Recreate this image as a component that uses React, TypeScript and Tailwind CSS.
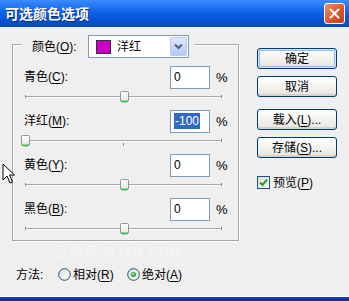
import React from "react";

function U({ children }: { children: React.ReactNode }) {
  return <span className="underline underline-offset-[2px]">{children}</span>;
}

function Thumb() {
  return (
    <svg width="11" height="12" viewBox="0 0 11 12">
      <defs>
        <linearGradient id="thg" x1="0" y1="0" x2="0" y2="1">
          <stop offset="0" stopColor="#ffffff" />
          <stop offset="1" stopColor="#e4e4dc" />
        </linearGradient>
      </defs>
      <path d="M2.5 0.5 H8.5 Q9.5 0.5 9.5 1.5 V9 Q9.5 11 7.5 11 H3.5 Q1.5 11 1.5 9 V1.5 Q1.5 0.5 2.5 0.5 Z" fill="url(#thg)" stroke="#8a97a3" />
      <path d="M2.3 9.3 Q2.5 10.3 3.6 10.3 H7.4 Q8.5 10.3 8.7 9.3" fill="none" stroke="#3cc447" strokeWidth="1.4" />
    </svg>
  );
}

function Slider({ pct }: { pct: number }) {
  return (
    <div className="relative ml-[12px] h-[22px] w-[197px]">
      <div className="absolute left-0 right-0 top-[8px] h-px bg-[#a7a7a7]" />
      <div className="absolute left-0 top-[9px] right-0 h-px bg-white" />
      <div className="absolute left-0 top-[7px] h-[3px] w-px bg-[#8c8c8c]" />
      <div className="absolute right-0 top-[7px] h-[3px] w-px bg-[#8c8c8c]" />
      <div className="absolute left-[98px] top-[11px] h-[3px] w-px bg-[#8c8c8c]" />
      <div className="absolute top-[3px]" style={{ left: `calc(${pct}% - 5px)` }}>
        <Thumb />
      </div>
    </div>
  );
}

function Row({ name, k, value, pct, sel }: { name: string; k: string; value: string; pct: number; sel?: boolean }) {
  return (
    <div className="flex flex-col">
      <div className="flex h-[22px] items-center">
        <span className="ml-[11px] w-[146px] leading-none">
          {name}(<U>{k}</U>):
        </span>
        <div className="flex h-[23px] w-[40px] items-center border border-[#7f9db9] bg-white pl-[3px]">
          {sel ? (
            <span className="bg-[#316ac5] px-[1px] leading-[16px] text-white">{value}</span>
          ) : (
            <span className="leading-none">{value}</span>
          )}
        </div>
        <span className="ml-[6px] text-[13px] leading-none">%</span>
      </div>
      <Slider pct={pct} />
    </div>
  );
}

function Btn({ children, def }: { children: React.ReactNode; def?: boolean }) {
  return (
    <div
      className={
        "flex h-[21px] w-[80px] items-center justify-center rounded-[3px] border border-[#003c74] bg-gradient-to-b from-[#ffffff] to-[#e6e5de] leading-none " +
        (def ? "shadow-[inset_0_0_0_1px_#cee7ff,inset_0_0_0_2px_#98b8ea]" : "shadow-[inset_0_-2px_0_#d6d0c5]")
      }
    >
      {children}
    </div>
  );
}

function Radio({ on }: { on?: boolean }) {
  return (
    <svg width="13" height="13" viewBox="0 0 13 13">
      <defs>
        <linearGradient id={on ? "rg1" : "rg0"} x1="0" y1="0" x2="1" y2="1">
          <stop offset="0" stopColor="#dcdcd6" />
          <stop offset="1" stopColor="#ffffff" />
        </linearGradient>
      </defs>
      <circle cx="6.5" cy="6.5" r="5.8" fill={`url(#${on ? "rg1" : "rg0"})`} stroke="#1c5180" strokeWidth="1" />
      {on && <circle cx="6.5" cy="6.5" r="2.6" fill="#3fb34a" />}
      {on && <circle cx="6" cy="6" r="1" fill="#a8e6a8" />}
    </svg>
  );
}

export default function App() {
  return (
    <div className="relative flex h-[301px] w-[349px] flex-col overflow-hidden bg-[#efefef] font-['Liberation_Sans','Noto_Sans_CJK_SC',sans-serif] text-[12px] text-black">
      {/* title bar */}
      <div className="flex h-[27px] shrink-0 items-center justify-between bg-gradient-to-b from-[#3a8cff] via-[#0a5fe4] to-[#0548c0] pl-[5px] pr-[4px]">
        <span className="text-[14px] font-bold leading-none text-white [text-shadow:1px_1px_0_#0b2a7a]">可选颜色选项</span>
        <div className="flex h-[21px] w-[21px] items-center justify-center rounded-[3px] border border-white bg-gradient-to-br from-[#f0926c] via-[#dc5a2c] to-[#c0401c]">
          <svg width="11" height="11" viewBox="0 0 11 11">
            <path d="M1.5 1.5 L9.5 9.5 M9.5 1.5 L1.5 9.5" stroke="#ffffff" strokeWidth="2" strokeLinecap="round" />
          </svg>
        </div>
      </div>

      {/* body */}
      <div className="flex flex-1 flex-col border-t border-white">
        <div className="flex">
          {/* left */}
          <div className="flex w-[239px] flex-col pl-[12px] pt-[16px]">
            <div className="h-[197px] w-[227px] border border-[#a5a5a5] shadow-[inset_1px_1px_0_#ffffff,1px_1px_0_#ffffff]">
              {/* legend row */}
              <div className="-mt-[10px] ml-[8px] flex h-[23px] w-[174px] items-center bg-[#efefef] pl-[11px]">
                <span className="w-[56px] leading-none">
                  颜色(<U>O</U>):
                </span>
                <div className="flex h-[23px] w-[101px] items-center border border-[#7f9db9] bg-white">
                  <div className="ml-[7px] h-[14px] w-[15px] border border-[#333] bg-[#c600c6]" />
                  <span className="ml-[6px] flex-1 leading-none">洋红</span>
                  <div className="mr-px flex h-[19px] w-[17px] items-center justify-center rounded-[2px] border border-[#bccaf0] bg-gradient-to-b from-[#dfe8fd] to-[#b5c9f5]">
                    <svg width="9" height="7" viewBox="0 0 9 7">
                      <path d="M1 1.5 L4.5 5 L8 1.5" fill="none" stroke="#4d6185" strokeWidth="2" />
                    </svg>
                  </div>
                </div>
              </div>
              <div className="mt-[8px] flex flex-col">
                <Row name="青色" k="C" value="0" pct={50} />
                <Row name="洋红" k="M" value="-100" pct={0} sel />
                <Row name="黄色" k="Y" value="0" pct={50} />
                <Row name="黑色" k="B" value="0" pct={50} />
              </div>
            </div>
            <div className="ml-[44px] mt-[4px] text-[13px] leading-[14px] tracking-[1px] text-[#f6f6f6]">三联网 3LIAN.COM</div>
          </div>

          {/* right */}
          <div className="ml-[18px] flex flex-col pt-[20px]">
            <Btn def>确定</Btn>
            <div className="mt-[7px]">
              <Btn>取消</Btn>
            </div>
            <div className="mt-[12px]">
              <Btn>
                载入(<U>L</U>)...
              </Btn>
            </div>
            <div className="mt-[7px]">
              <Btn>
                存储(<U>S</U>)...
              </Btn>
            </div>
            <div className="mt-[18px] flex items-center">
              <div className="flex h-[13px] w-[13px] items-center justify-center border border-[#1c5180] bg-gradient-to-br from-[#dcdcd6] to-white">
                <svg width="9" height="9" viewBox="0 0 9 9">
                  <path d="M1 4.5 L3.5 7 L8 1.5" fill="none" stroke="#21a121" strokeWidth="2" />
                </svg>
              </div>
              <span className="ml-[3px] leading-none">
                预览(<U>P</U>)
              </span>
            </div>
          </div>
        </div>

        {/* method row */}
        <div className="ml-[16px] mt-[9px] flex items-center">
          <span className="w-[42px] leading-none">方法:</span>
          <Radio />
          <span className="ml-[2px] w-[54px] leading-none">
            相对(<U>R</U>)
          </span>
          <Radio on />
          <span className="ml-[2px] leading-none">
            绝对(<U>A</U>)
          </span>
        </div>
        <div className="flex-1" />
        <div className="h-px bg-white" />
        <div className="h-[4px] bg-gradient-to-b from-[#1a47b8] to-[#0a2a8a]" />
      </div>

      {/* mouse cursor */}
      <svg className="absolute left-[2px] top-[163px]" width="14" height="22" viewBox="0 0 14 22">
        <path d="M1 1 L1 17 L5 13 L8 20 L10.5 19 L7.5 12 L12.5 12 Z" fill="#ffffff" stroke="#000000" strokeWidth="1" strokeLinejoin="miter" />
      </svg>
    </div>
  );
}
